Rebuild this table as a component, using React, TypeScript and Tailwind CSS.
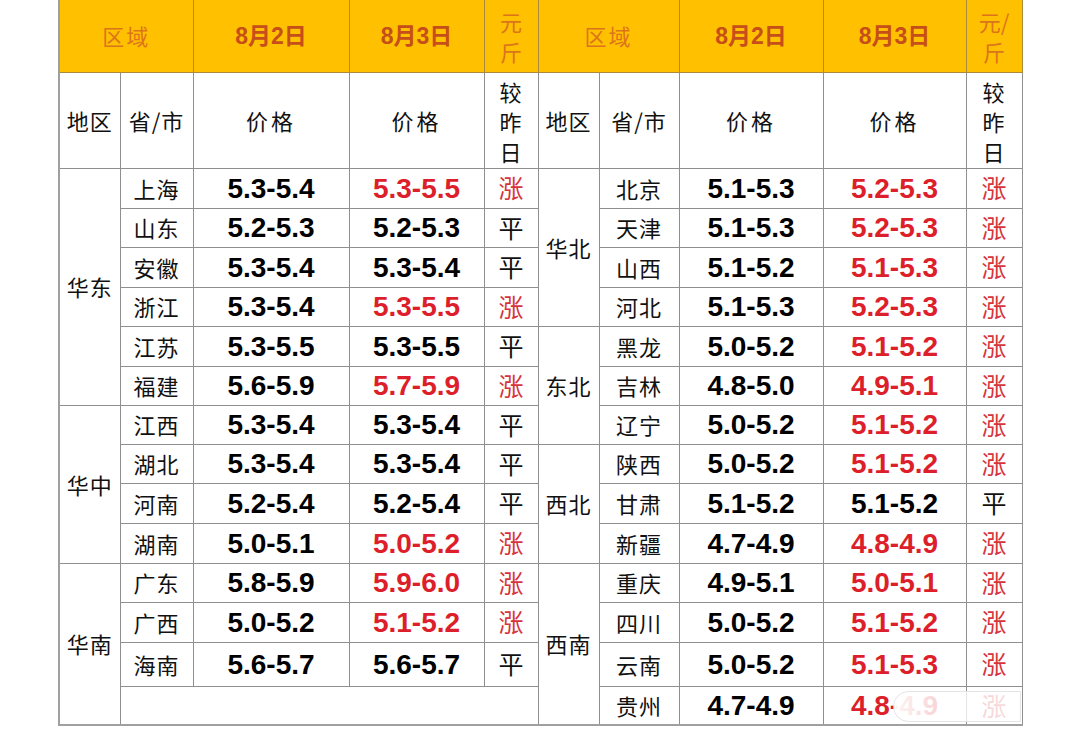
import React from 'react';

type Row = { name: string; d2: string; d3: string; up: boolean };

const leftRows: Row[] = [
  { name: '上海', d2: '5.3-5.4', d3: '5.3-5.5', up: true },
  { name: '山东', d2: '5.2-5.3', d3: '5.2-5.3', up: false },
  { name: '安徽', d2: '5.3-5.4', d3: '5.3-5.4', up: false },
  { name: '浙江', d2: '5.3-5.4', d3: '5.3-5.5', up: true },
  { name: '江苏', d2: '5.3-5.5', d3: '5.3-5.5', up: false },
  { name: '福建', d2: '5.6-5.9', d3: '5.7-5.9', up: true },
  { name: '江西', d2: '5.3-5.4', d3: '5.3-5.4', up: false },
  { name: '湖北', d2: '5.3-5.4', d3: '5.3-5.4', up: false },
  { name: '河南', d2: '5.2-5.4', d3: '5.2-5.4', up: false },
  { name: '湖南', d2: '5.0-5.1', d3: '5.0-5.2', up: true },
  { name: '广东', d2: '5.8-5.9', d3: '5.9-6.0', up: true },
  { name: '广西', d2: '5.0-5.2', d3: '5.1-5.2', up: true },
  { name: '海南', d2: '5.6-5.7', d3: '5.6-5.7', up: false },
];

const rightRows: Row[] = [
  { name: '北京', d2: '5.1-5.3', d3: '5.2-5.3', up: true },
  { name: '天津', d2: '5.1-5.3', d3: '5.2-5.3', up: true },
  { name: '山西', d2: '5.1-5.2', d3: '5.1-5.3', up: true },
  { name: '河北', d2: '5.1-5.3', d3: '5.2-5.3', up: true },
  { name: '黑龙', d2: '5.0-5.2', d3: '5.1-5.2', up: true },
  { name: '吉林', d2: '4.8-5.0', d3: '4.9-5.1', up: true },
  { name: '辽宁', d2: '5.0-5.2', d3: '5.1-5.2', up: true },
  { name: '陕西', d2: '5.0-5.2', d3: '5.1-5.2', up: true },
  { name: '甘肃', d2: '5.1-5.2', d3: '5.1-5.2', up: false },
  { name: '新疆', d2: '4.7-4.9', d3: '4.8-4.9', up: true },
  { name: '重庆', d2: '4.9-5.1', d3: '5.0-5.1', up: true },
  { name: '四川', d2: '5.0-5.2', d3: '5.1-5.2', up: true },
  { name: '云南', d2: '5.0-5.2', d3: '5.1-5.3', up: true },
  { name: '贵州', d2: '4.7-4.9', d3: '4.8-4.9', up: true },
];

// region label starts: row index -> [label, rowSpan]
const leftRegions: Record<number, [string, number]> = { 0: ['华东', 6], 6: ['华中', 4], 10: ['华南', 4] };
const rightRegions: Record<number, [string, number]> = { 0: ['华北', 4], 4: ['东北', 3], 7: ['西北', 3], 10: ['西南', 4] };

const rowHeights = [
  'h-[40px]', 'h-[39px]', 'h-[40px]', 'h-[39px]', 'h-[40px]', 'h-[39px]', 'h-[39px]',
  'h-[39px]', 'h-[40px]', 'h-[40px]', 'h-[39px]', 'h-[40px]', 'h-[44px]', 'h-[39px]',
];

const cell = 'border border-[#8f8f8f] p-0 text-center align-middle';
const head = 'border border-[#a88a3a] p-0 text-center align-middle';
const cjk = "font-['Noto_Sans_CJK_SC',sans-serif] text-[22px] tracking-[1px] text-[#111]";
const num = "font-['Liberation_Sans',Arial,sans-serif] font-bold text-[28px] leading-none relative top-[1px]";
const red = 'text-[#dc1f2a]';

const Side: React.FC<{ row?: Row; region?: [string, number]; empty?: boolean }> = ({ row, region, empty }) => (
  <>
    {region && (
      <td rowSpan={region[1]} className={cell}>
        <span className={cjk}>{region[0]}</span>
      </td>
    )}
    {empty && <td colSpan={4} className={cell}></td>}
    {row && (
      <>
        <td className={cell}>
          <span className={cjk}>{row.name}</span>
        </td>
        <td className={cell}>
          <span className={`${num} text-black`}>{row.d2}</span>
        </td>
        <td className={cell}>
          <span className={`${num} ${row.up ? red : 'text-black'}`}>{row.d3}</span>
        </td>
        <td className={cell}>
          <span className={`${cjk} text-[25px] tracking-normal ${row.up ? 'text-[#d6343a]' : ''}`}>{row.up ? '涨' : '平'}</span>
        </td>
      </>
    )}
  </>
);

export default function App() {
  const headCjk = "font-['Noto_Sans_CJK_SC',sans-serif] text-[22px] tracking-[2px] text-[#dc741c]";
  const headDate = "font-['Liberation_Sans','Noto_Sans_CJK_SC',sans-serif] font-bold text-[23px] text-[#c54e1a]";

  return (
    <div className="w-[1080px] h-[730px] bg-white overflow-hidden">
      <div className="relative pl-[58px]">
        <table className="table-fixed border-collapse w-[963px] border-l-2 border-b-2 border-[#a0a0a0]">
          <colgroup>
            <col className="w-[61px]" />
            <col className="w-[73px]" />
            <col className="w-[156px]" />
            <col className="w-[135px]" />
            <col className="w-[54px]" />
            <col className="w-[61px]" />
            <col className="w-[80px]" />
            <col className="w-[144px]" />
            <col className="w-[143px]" />
            <col className="w-[56px]" />
          </colgroup>
          <tbody>
            <tr className="h-[72px] bg-[#ffc000]">
              <td colSpan={2} className={`${head} border-t-0`}>
                <span className={headCjk}>区域</span>
              </td>
              <td className={`${head} border-t-0`}>
                <span className={headDate}>8月2日</span>
              </td>
              <td className={`${head} border-t-0`}>
                <span className={headDate}>8月3日</span>
              </td>
              <td className={`${head} border-t-0`}>
                <div className={`${headCjk} leading-[30px] tracking-normal`}>
                  元<br />斤
                </div>
              </td>
              <td colSpan={2} className={`${head} border-t-0`}>
                <span className={headCjk}>区域</span>
              </td>
              <td className={`${head} border-t-0`}>
                <span className={headDate}>8月2日</span>
              </td>
              <td className={`${head} border-t-0`}>
                <span className={headDate}>8月3日</span>
              </td>
              <td className={`${head} border-t-0`}>
                <div className={`${headCjk} leading-[30px] tracking-normal`}>
                  元/<br />斤
                </div>
              </td>
            </tr>
            <tr className="h-[96px]">
              {[0, 1].map((s) => (
                <React.Fragment key={s}>
                  <td className={cell}>
                    <span className={cjk}>地区</span>
                  </td>
                  <td className={cell}>
                    <span className={cjk}>省/市</span>
                  </td>
                  <td className={cell}>
                    <span className={`${cjk} tracking-[3px]`}>价格</span>
                  </td>
                  <td className={cell}>
                    <span className={`${cjk} tracking-[3px]`}>价格</span>
                  </td>
                  <td className={cell}>
                    <div className={`${cjk} leading-[30px] pt-[2px]`}>
                      较<br />昨<br />日
                    </div>
                  </td>
                </React.Fragment>
              ))}
            </tr>
            {rowHeights.map((h, i) => (
              <tr key={i} className={h}>
                <Side row={leftRows[i]} region={leftRegions[i]} empty={i === 13} />
                <Side row={rightRows[i]} region={rightRegions[i]} />
              </tr>
            ))}
          </tbody>
        </table>
        {/* watermark over the last row */}
        <div className="absolute left-[893px] top-[691px] w-[128px] h-[31px] rounded-l-full border border-[#e4e4e4] bg-gradient-to-r from-white/95 via-white/75 to-white/85"></div>
      </div>
    </div>
  );
}
